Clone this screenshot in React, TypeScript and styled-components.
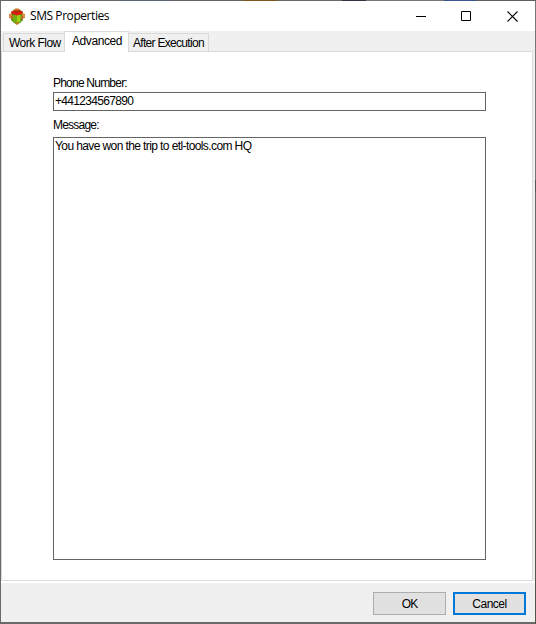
import React from 'react';
import styled, { createGlobalStyle } from 'styled-components';

const GlobalStyle = createGlobalStyle`
  * { box-sizing: border-box; }
  body { margin: 0; background: #fff; overflow: hidden; }
`;

const Desktop = styled.div`
  width: 536px;
  height: 624px;
  padding: 1px 1px 2px 1px;
  background:
    linear-gradient(90deg, #666 0 52px, #4c5f8c 52px 54px, #686868 54px 120px, #5b6478 120px 172px, #666 172px 243px, #7c561b 243px 277px, #686868 277px 342px, #343040 342px 366px, #777 366px 444px, #3c5590 444px 476px, #606060 476px) top / 100% 1px no-repeat,
    linear-gradient(#777 0 180px, #555 180px 192px, #686868 192px 440px, #55554c 440px) right / 1px 100% no-repeat,
    #6a6a66;
  font: 12px/14px 'Liberation Sans', Arial, sans-serif;
  color: #000;
`;

const Dialog = styled.div`
  width: 534px;
  height: 621px;
  display: flex;
  flex-direction: column;
  background: #f0f0f0;
`;

const TitleBar = styled.header`
  height: 30px;
  flex: none;
  display: flex;
  align-items: center;
  padding-left: 8px;
  background: #fff;
`;

const Title = styled.h1<{ $spacing: number }>`
  flex: 1;
  margin: 0 0 0 5px;
  font: 400 12px/16px 'Open Sans', 'Noto Sans', sans-serif;
  letter-spacing: ${(p) => p.$spacing}px;
`;

const WindowButton = styled.button<{ $width: number }>`
  width: ${(p) => p.$width}px;
  height: 30px;
  padding: 0;
  border: 0;
  background: transparent;
  display: grid;
  place-items: center;
  &:last-child { padding-left: 1px; }
`;

const TabStrip = styled.nav`
  height: 20px;
  flex: none;
  display: flex;
  align-items: flex-end;
  padding-left: 2px;
`;

const Tab = styled.button<{ $active?: boolean; $joined?: boolean; $width: number; $spacing: number }>`
  width: ${(p) => p.$width}px;
  height: ${(p) => (p.$active ? 21 : 18)}px;
  margin-bottom: ${(p) => (p.$active ? -1 : 0)}px;
  padding: ${(p) => (p.$active ? '0 0 2px 7px' : '1px 0 0')};
  padding-left: ${(p) => (p.$active ? 7 : p.$joined ? 4 : 5)}px;
  border: 1px solid #dadada;
  border-bottom: 0;
  border-left-width: ${(p) => (p.$joined ? 0 : 1)}px;
  border-right-width: ${(p) => (!p.$active && !p.$joined ? 0 : 1)}px;
  background: ${(p) => (p.$active ? '#fff' : '#f0f0f0')};
  font: inherit;
  letter-spacing: ${(p) => p.$spacing}px;
  text-align: left;
  white-space: nowrap;
  color: #000;
  z-index: ${(p) => (p.$active ? 1 : 0)};
`;

const Page = styled.main`
  width: 532px;
  height: 530px;
  flex: none;
  padding: 24px 46px 0 51px;
  border: 1px solid #dadada;
  background: #fff;
`;

const Label = styled.label<{ $spacing: number }>`
  display: block;
  height: 16px;
  letter-spacing: ${(p) => p.$spacing}px;
  white-space: nowrap;
`;

const Field = styled.div<{ $height: number; $spacing: number }>`
  width: 433px;
  height: ${(p) => p.$height}px;
  padding: 1px 0 0 1px;
  border: 1px solid #646464;
  letter-spacing: ${(p) => p.$spacing}px;
  white-space: nowrap;
`;

const Gap = styled.div<{ $size: number }>`
  height: ${(p) => p.$size}px;
`;

const Footer = styled.footer`
  flex: 1;
  display: flex;
  justify-content: flex-end;
  gap: 7px;
  padding: 9px 9px 0 0;
  border-top: 2px solid #fff;
`;

const Button = styled.button<{ $primary?: boolean; $spacing: number }>`
  width: 73px;
  height: 23px;
  padding: 1px 0 0;
  border: ${(p) => (p.$primary ? '2px solid #0078d7' : '1px solid #adadad')};
  background: #e1e1e1;
  font: inherit;
  letter-spacing: ${(p) => p.$spacing}px;
  color: #000;
`;

const AppIcon = () => (
  <svg width="16" height="17" viewBox="0 0 16 17">
    <path d="M2 4 6 1h4l4 3v8l-3 3-3 1.500-3-1.500-3-3z" fill="#5c8f0c" />
    <path d="M0 6l3-1v6l-3-1zM13 5l3 1v4l-3 1z" fill="#d98a40" />
    <path d="M4 7h8v7l-2 1H6l-2-2z" fill="#72b010" />
    <path d="M8 7h3v7H8z" fill="#a3cb1a" />
    <path d="M2 4l4-2h4l4 2-1 2-5 1.500L3 6z" fill="#d8200d" />
    <path d="M6 3h4v1H6z" fill="#9a2a0b" />
    <path d="M6 .5h4v2H6zM6 14.500h4l-1 2H7z" fill="#d4731f" />
    <path d="M2 8h2v3H2zM12 8h2v3h-2z" fill="#b96f26" />
  </svg>
);

export default function App() {
  return (
    <>
      <GlobalStyle />
      <Desktop>
        <Dialog>
          <TitleBar>
            <AppIcon />
            <Title $spacing={-0.43}>SMS Properties</Title>
            <WindowButton $width={44} aria-label="Minimize">
              <svg width="10" height="10" shapeRendering="crispEdges"><path d="M0 5h10v1H0z" /></svg>
            </WindowButton>
            <WindowButton $width={46} aria-label="Maximize">
              <svg width="10" height="10"><path d="M.5.5h9v9h-9z" fill="none" stroke="#000" /></svg>
            </WindowButton>
            <WindowButton $width={46} aria-label="Close">
              <svg width="11" height="11"><path d="m.5.5 10 10m0-10-10 10" fill="none" stroke="#000" strokeWidth="1.1" /></svg>
            </WindowButton>
          </TitleBar>
          <TabStrip>
            <Tab $width={61} $spacing={-0.52}>Work Flow</Tab>
            <Tab $active $width={65} $spacing={-0.42}>Advanced</Tab>
            <Tab $joined $width={80} $spacing={-0.7}>After Execution</Tab>
          </TabStrip>
          <Page>
            <Label $spacing={-0.78}>Phone Number:</Label>
            <Field $height={19} $spacing={-0.68}>+441234567890</Field>
            <Gap $size={7} />
            <Label $spacing={-0.78}>Message:</Label>
            <Gap $size={3} />
            <Field $height={423} $spacing={-0.6}>You have won the trip to etl-tools.com HQ</Field>
          </Page>
          <Footer>
            <Button $spacing={-0.8}>OK</Button>
            <Button $primary $spacing={-0.5}>Cancel</Button>
          </Footer>
        </Dialog>
      </Desktop>
    </>
  );
}
